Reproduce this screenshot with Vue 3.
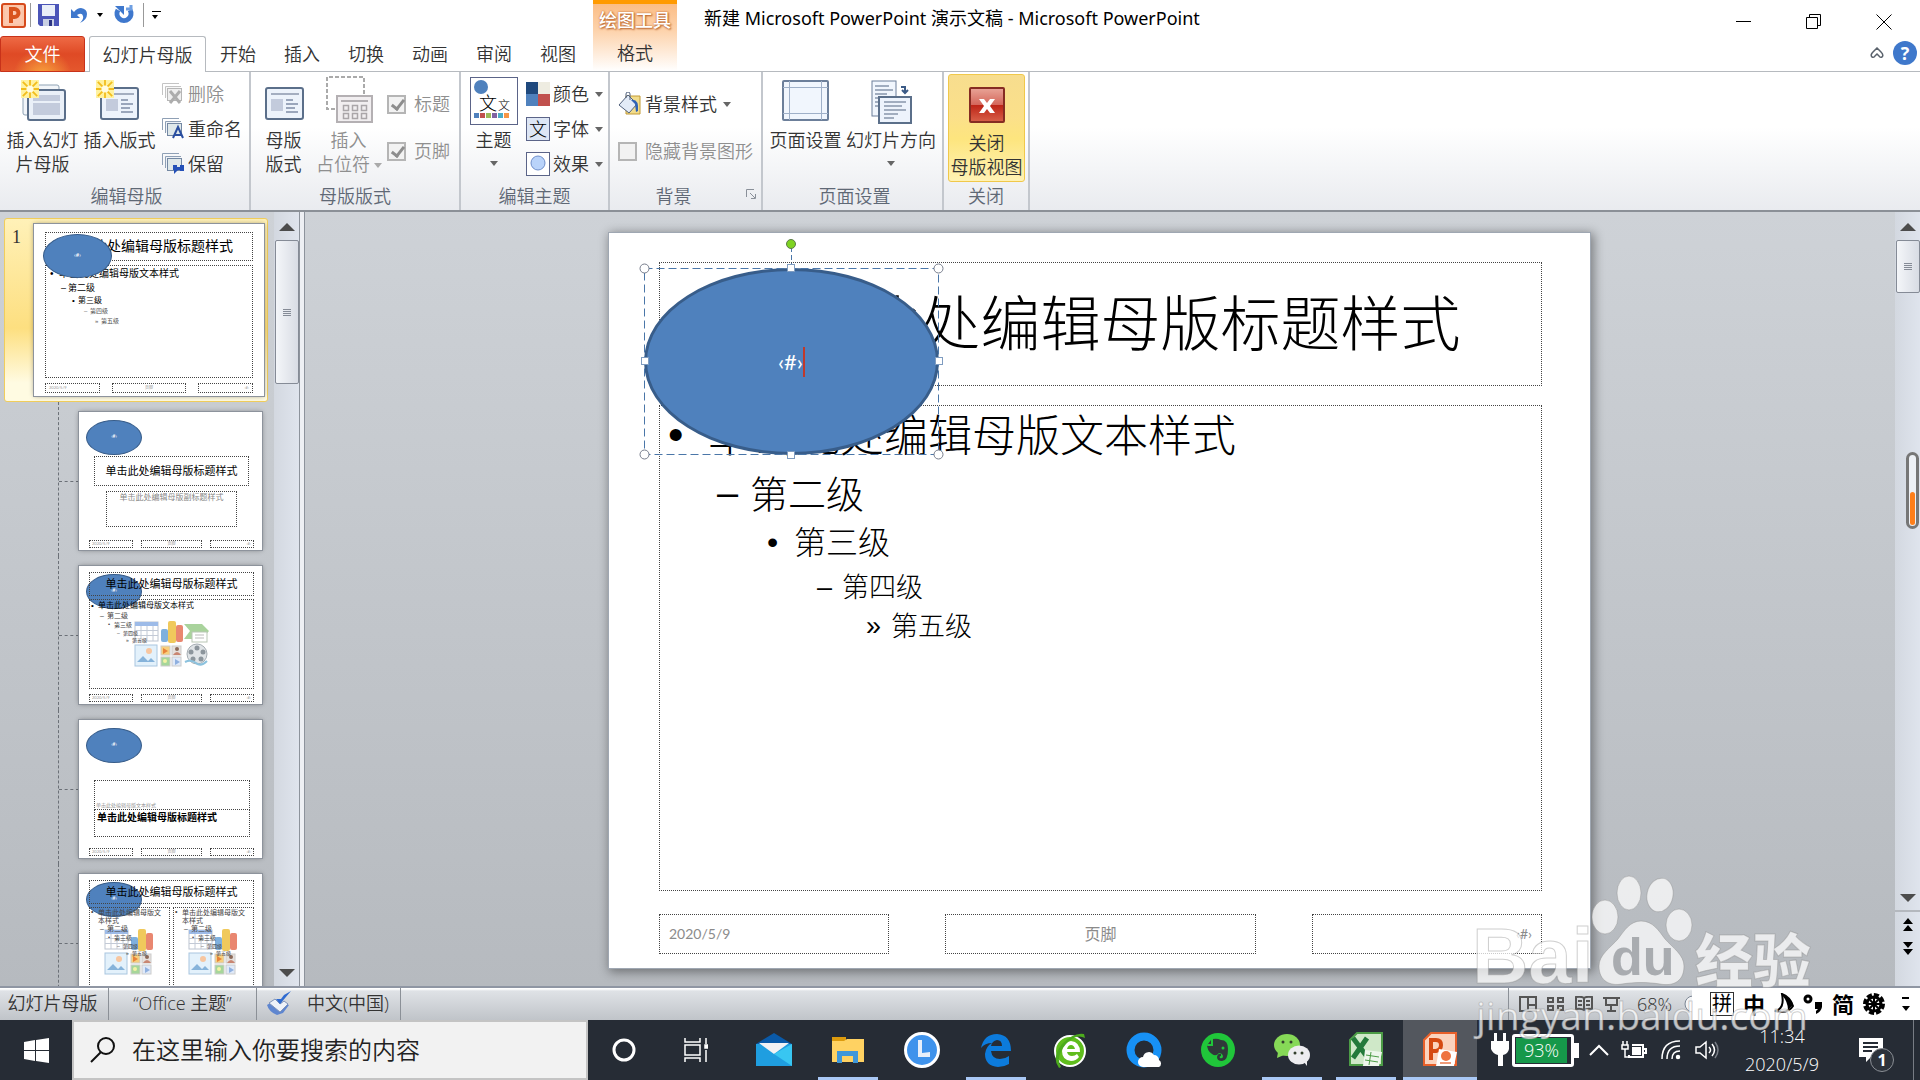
<template>
  <div class="app">
    <svg class="defs" aria-hidden="true">
      <symbol id="content-icons" viewBox="0 0 75 46">
        <rect x="1" y="1" width="23" height="19" fill="#fff" stroke="#bcc4d0" />
        <rect x="1" y="1" width="23" height="4" fill="#9dbbe8" />
        <path d="M1 9.500h23M1 14.500h23M7 5v15M13 5v15M19 5v15" stroke="#c3cad6" />
        <rect x="27" y="8" width="7" height="13" rx="2" fill="#7fb0dd" />
        <rect x="34" y="0" width="8" height="22" rx="2" fill="#f0c95c" />
        <rect x="42" y="4" width="7" height="17" rx="2" fill="#e98770" />
        <path d="M50 3h18l7 7-7 8H50l6-8z" fill="#a9d39c" />
        <rect x="58" y="11" width="15" height="10" fill="#fff" stroke="#b9c6b5" />
        <path d="M61 14h9M61 17h9" stroke="#bbb" />
        <rect x="1" y="24" width="22" height="21" fill="#e3f1fb" stroke="#a9c6df" />
        <circle cx="15" cy="30" r="3" fill="#f7c6a0" />
        <path d="M3 41l6-6 5 5 3-3 4 4z" fill="#86b3da" />
        <rect x="27" y="25" width="9" height="9" fill="#f7cf7d" stroke="#ccc" />
        <path d="M29 27l5 3-5 3z" fill="#e8833a" />
        <rect x="38" y="25" width="9" height="9" fill="#e6e0dc" stroke="#ccc" />
        <circle cx="43" cy="28" r="2" fill="#8d6a5a" />
        <path d="M39 34q4-6 8 0z" fill="#c98672" />
        <rect x="27" y="36" width="9" height="9" fill="#a6d69a" stroke="#ccc" />
        <circle cx="31" cy="40" r="2" fill="#f3f3a4" />
        <rect x="38" y="36" width="9" height="9" fill="#dfe9f8" stroke="#ccc" />
        <path d="M41 38l5 3-5 3z" fill="#8fb0e0" />
        <circle cx="63" cy="33" r="10" fill="#dfe3e6" stroke="#a5adb3" />
        <g fill="#8c959c">
          <circle cx="63" cy="27" r="2.500" /><circle cx="57" cy="31" r="2.500" /><circle cx="69" cy="31" r="2.500" />
          <circle cx="59" cy="38" r="2.500" /><circle cx="67" cy="38" r="2.500" />
        </g>
        <path d="M51 41q6-3 11 1t11-2" fill="none" stroke="#8cc2de" stroke-width="2" />
      </symbol>
      <symbol id="burst" viewBox="0 0 20 20">
        <rect width="20" height="20" fill="#fff2a0" />
        <path d="M10 0v20M0 10h20M2 2l16 16M18 2L2 18" stroke="#f2bd1d" stroke-width="2" />
        <circle cx="10" cy="10" r="4" fill="#fffbe0" />
      </symbol>
      <symbol id="slides-stack" viewBox="0 0 24 24">
        <path d="M1.500 13V1.500H18" fill="none" stroke="#8fa0b5" />
        <path d="M4.500 16V4.500H20" fill="#eef2f7" stroke="#8fa0b5" />
        <rect x="6.500" y="6.500" width="14" height="12" fill="#dfe8ea" stroke="#7488a3" />
      </symbol>
    </svg>

    <header class="titlebar">
      <div class="left">
        <div class="quick">
          <svg class="app-icon" viewBox="0 0 25 25">
            <rect x="1" y="1" width="23" height="23" rx="2" fill="#fbc5a8" stroke="#d64a1c" stroke-width="2" />
            <rect x="4" y="4" width="17" height="17" fill="#fcc9b0" />
            <path d="M10 20V6h3.500a4 4 0 010 8H10" fill="none" stroke="#d9541e" stroke-width="4" />
          </svg>
          <i class="bar"></i>
          <button class="tool" aria-label="保存">
            <svg width="23" height="23" viewBox="0 0 23 23">
              <path d="M1 0h21v22H3l-2-2z" fill="#4b55b8" />
              <rect x="5" y="1" width="13" height="11" fill="#e9eef8" />
              <rect x="6" y="15" width="11" height="7" fill="#c9d0e3" />
              <rect x="12" y="16" width="3" height="6" fill="#2d3583" />
            </svg>
          </button>
          <button class="tool undo" aria-label="撤消">
            <svg width="18" height="20" viewBox="0 0 18 20">
              <path d="M1 4v9h9l-3-3q5-3 6 1 1 3-3 7 7-3 7-9 0-5-6-6-4 0-7 4z" fill="#3f78cd" />
            </svg>
          </button>
          <i class="caret dark"></i>
          <button class="tool redo" aria-label="恢复">
            <svg width="20" height="20" viewBox="0 0 20 20">
              <path d="M4 5a7 7 0 1012 0" fill="none" stroke="#3f78cd" stroke-width="5" />
              <path d="M1 1h9v9z" fill="#3f78cd" />
              <path d="M12 4h5V0" fill="none" stroke="#6f9fe2" stroke-width="3" />
            </svg>
          </button>
          <i class="bar"></i>
          <button class="tool custom" aria-label="自定义快速访问工具栏"><i class="line"></i><i class="caret dark"></i></button>
        </div>
        <nav class="tabs">
          <button class="tab file">文件</button>
          <button class="tab active">幻灯片母版</button>
          <button v-for="t in tabs" :key="t" class="tab">{{ t }}</button>
        </nav>
      </div>
      <div class="context">
        <span class="context-title">绘图工具</span>
        <button class="tab">格式</button>
      </div>
      <h1 class="doc-title">新建 Microsoft PowerPoint 演示文稿 - Microsoft PowerPoint</h1>
      <div class="window">
        <div class="window-buttons">
          <button aria-label="最小化"><svg width="16" height="16"><path d="M0 7.500h15" stroke="#000" /></svg></button>
          <button aria-label="还原">
            <svg width="16" height="16" fill="none" stroke="#000"><path d="M.5 3.500h11v11H.5zM3.500 3V.5h11v11H12" /></svg>
          </button>
          <button aria-label="关闭"><svg width="16" height="16"><path d="M.5.5l15 15M15.500.5l-15 15" stroke="#000" /></svg></button>
        </div>
        <div class="help-row">
          <svg width="14" height="12" fill="none" stroke="#5a626c" stroke-width="1.500"><path d="M2 10q-2-2 1-5l4-4 4 4q3 3 1 5-2 1-3-1l-2-2-2 2q-1 2-3 1z" /></svg>
          <button class="help" aria-label="帮助">?</button>
        </div>
      </div>
    </header>

    <section class="ribbon">
      <div class="group g1">
        <div class="items">
          <button class="big">
            <svg width="48" height="48" viewBox="0 0 48 48">
              <rect x="4" y="5" width="36" height="30" rx="2" fill="#f2f5f9" stroke="#8fa3b5" />
              <rect x="9" y="10" width="37" height="30" rx="2" fill="#eaf0f8" stroke="#5b6f8a" stroke-width="2" />
              <path d="M14 15h27v6H14zM14 23h27v12H14z" fill="#c3cbdc" />
              <use href="#burst" x="1" y="0" width="20" height="18" />
            </svg>
            插入幻灯<br />片母版
          </button>
          <button class="big">
            <svg width="48" height="48" viewBox="0 0 48 48">
              <rect x="5" y="8" width="37" height="31" rx="2" fill="#edf3fb" stroke="#5b6f8a" stroke-width="2" />
              <path d="M18 14h20" stroke="#a4aec0" stroke-width="2" />
              <rect x="10" y="19" width="12" height="12" fill="#c3cbdc" />
              <path d="M25 20h7M25 24h12M25 28h9M25 32h12" stroke="#9aa6bb" stroke-width="2" />
              <use href="#burst" x="-1" y="0" width="20" height="18" />
            </svg>
            插入版式
          </button>
          <div class="rows">
            <button class="row" disabled>
              <svg width="24" height="24" class="faded"><use href="#slides-stack" width="24" height="24" /><path d="M9 9l10 12M19 9L9 21" stroke="#777" stroke-width="3" /></svg>
              删除
            </button>
            <button class="row">
              <svg width="24" height="24"><use href="#slides-stack" width="24" height="24" /><path d="M12 21l5-11 5 11M14 18h6" fill="none" stroke="#2b4fa0" stroke-width="2" /></svg>
              重命名
            </button>
            <button class="row">
              <svg width="24" height="24"><use href="#slides-stack" width="24" height="24" /><path d="M12 13h4v2h3v-2h4v6h-4v-1h-2l-4 4v-4h-1z" fill="#2450b8" /></svg>
              保留
            </button>
          </div>
        </div>
        <div class="group-name">编辑母版</div>
      </div>

      <div class="group g2">
        <div class="items">
          <button class="big narrow">
            <svg width="48" height="48" viewBox="0 0 48 48">
              <rect x="6" y="8" width="37" height="31" rx="2" fill="#edf3fb" stroke="#5b6f8a" stroke-width="2" />
              <path d="M11 14h28" stroke="#a4aec0" stroke-width="2" />
              <rect x="11" y="19" width="12" height="12" fill="#c3cbdc" />
              <path d="M26 20h7M26 24h12M26 28h9M26 32h12" stroke="#9aa6bb" stroke-width="2" />
            </svg>
            母版<br />版式
          </button>
          <button class="big narrow" disabled>
            <svg width="48" height="48" viewBox="0 0 48 48">
              <path d="M10 29H2V-3H39V14" fill="none" stroke="#aaa" stroke-width="2" stroke-dasharray="4 2" />
              <rect x="12" y="16" width="35" height="26" fill="#f1eef0" stroke="#b4b0b3" stroke-width="2" />
              <path d="M16 21h27" stroke="#b4b0b3" stroke-width="2" />
              <path d="M18.500 25.500h5v5h-5zM27.500 25.500h5v5h-5zM36.500 25.500h5v5h-5zM18.500 33.500h5v5h-5zM27.500 33.500h5v5h-5zM36.500 33.500h5v5h-5z" fill="none" stroke="#aaa6a9" stroke-width="1.500" />
            </svg>
            插入<br />占位符<i class="caret inline"></i>
          </button>
          <div class="checks">
            <label><input type="checkbox" checked disabled />标题</label>
            <label><input type="checkbox" checked disabled />页脚</label>
          </div>
        </div>
        <div class="group-name">母版版式</div>
      </div>

      <div class="group g3">
        <div class="items">
          <button class="big theme">
            <svg width="48" height="48" viewBox="0 0 48 48">
              <rect x=".5" y=".5" width="47" height="47" fill="#fff" stroke="#5b6488" />
              <circle cx="11" cy="10" r="7" fill="#4f81bd" />
              <text x="9" y="33" font-size="18">文</text><text x="28" y="33" font-size="12">文</text>
              <path d="M4 36h5v5H4z" fill="#4f81bd" /><path d="M10 36h5v5h-5z" fill="#c0504d" />
              <path d="M16 36h5v5h-5z" fill="#9bbb59" /><path d="M22 36h5v5h-5z" fill="#8064a2" />
              <path d="M28 36h5v5h-5z" fill="#4bacc6" /><path d="M34 36h5v5h-5z" fill="#f79646" />
            </svg>
            主题<i class="caret"></i>
          </button>
          <div class="rows">
            <button class="row">
              <svg width="24" height="24">
                <path d="M0 0h12v12H0z" fill="#1f497d" /><path d="M12 0h12v12H12z" fill="#eeece1" />
                <path d="M0 12h12v12H0z" fill="#4f81bd" /><path d="M12 12h12v12H12z" fill="#c0504d" />
              </svg>
              颜色<i class="caret"></i>
            </button>
            <button class="row">
              <svg width="24" height="24"><rect x=".5" y=".5" width="23" height="23" fill="#dde6f5" stroke="#5b6488" /><text x="3" y="19" font-size="18">文</text></svg>
              字体<i class="caret"></i>
            </button>
            <button class="row">
              <svg width="24" height="24"><rect x=".5" y=".5" width="23" height="23" fill="#fff" stroke="#5b6488" /><circle cx="12" cy="11" r="7" fill="#b9d3fa" stroke="#6f8fcb" /></svg>
              效果<i class="caret"></i>
            </button>
          </div>
        </div>
        <div class="group-name">编辑主题</div>
      </div>

      <div class="group g4">
        <div class="items stacked">
          <button class="row">
            <svg width="24" height="24">
              <path d="M8 4h14v18H8z" fill="#f2dc8b" stroke="#c29a35" />
              <path d="M1 13l9-10 9 9-8 9z" fill="#e3ebf7" stroke="#50607c" />
              <path d="M8 6V2a2 2 0 014 0v6" fill="none" stroke="#50607c" />
              <path d="M13 8q8-2 7 11l-2 1-1-8z" fill="#2f62b5" />
            </svg>
            背景样式<i class="caret"></i>
          </button>
          <label><input type="checkbox" disabled />隐藏背景图形</label>
        </div>
        <div class="group-name">
          背景
          <button class="launcher" aria-label="设置背景格式">
            <svg width="10" height="10" fill="none" stroke="#8a9099"><path d="M.5 8V.5H8M4 4l5 5M9.500 5v4.500H5" /></svg>
          </button>
        </div>
      </div>

      <div class="group g5">
        <div class="items">
          <button class="big">
            <svg width="48" height="48" viewBox="0 0 48 48">
              <rect x="1" y="1" width="45" height="39" rx="1" fill="#f1f6fd" stroke="#6c7f9a" stroke-width="2" />
              <path d="M7.500 1v39M39.500 1v39M1 7.500h45M1 33.500h45" stroke="#9fb0c8" />
            </svg>
            页面设置
          </button>
          <button class="big wide">
            <svg width="48" height="48" viewBox="0 0 48 48">
              <rect x="5" y="1" width="24" height="35" fill="#f1f6fd" stroke="#6c7f9a" />
              <path d="M8 6h14M8 10h18M8 14h12M8 18h3M8 22h3M8 26h3" stroke="#a1adbf" stroke-width="2" />
              <rect x="12" y="17" width="32" height="26" fill="#edf3fc" stroke="#5b6f8a" stroke-width="2" />
              <path d="M17 22h22M17 26h18M17 30h22M17 34h14M17 38h10" stroke="#a1adbf" stroke-width="2" />
              <path d="M34 7h4v6M35 10l3 3 3-3" fill="none" stroke="#3b5a86" stroke-width="2" />
            </svg>
            幻灯片方向<i class="caret"></i>
          </button>
        </div>
        <div class="group-name">页面设置</div>
      </div>

      <div class="group g6">
        <div class="items">
          <button class="big close-master">
            <svg width="48" height="48" viewBox="0 0 48 48">
              <defs>
                <linearGradient id="red" x1="0" y1="0" x2="0" y2="1">
                  <stop offset="0" stop-color="#e9a598" /><stop offset=".5" stop-color="#d4665a" />
                  <stop offset=".5" stop-color="#bd2416" /><stop offset="1" stop-color="#d8614a" />
                </linearGradient>
              </defs>
              <rect x="7" y="5" width="34" height="34" rx="1" fill="url(#red)" stroke="#862c22" stroke-width="2" />
              <path d="M16 16h5l3 4 3-4h5l-5 7 5 7h-5l-3-4-3 4h-5l5-7z" fill="#fff" />
            </svg>
            关闭<br />母版视图
          </button>
        </div>
        <div class="group-name">关闭</div>
      </div>
    </section>

    <main class="workspace">
      <aside class="thumbs">
        <div class="thumb-list">
          <div class="master-item">
            <span class="number">1</span>
            <div class="thumb master">
              <div class="box m-title">单击此处编辑母版标题样式</div>
              <div class="box m-body">
                <p v-for="(l, i) in levels" :key="i" :class="'m' + (i + 1)"><b>{{ l.mark }}</b>{{ l.text }}</p>
              </div>
              <div class="box m-date">2020/5/9</div>
              <div class="box m-foot">页脚</div>
              <div class="box m-num">‹#›</div>
              <div class="oval">‹#›</div>
            </div>
          </div>
          <div v-for="kind in layouts" :key="kind" class="branch">
            <div class="thumb layout">
              <div class="oval">‹#›</div>
              <template v-if="kind === 'cover'">
                <div class="box c-title">单击此处编辑母版标题样式</div>
                <div class="box c-sub">单击此处编辑母版副标题样式</div>
              </template>
              <template v-else-if="kind === 'section'">
                <div class="box s-text">单击此处编辑母版文本样式</div>
                <div class="box s-title">单击此处编辑母版标题样式</div>
              </template>
              <template v-else>
                <div class="box l-title">单击此处编辑母版标题样式</div>
                <div v-for="n in kind === 'two' ? 2 : 1" :key="n" class="box l-body" :class="[kind, 'col' + n]">
                  <svg class="content-icons" :viewBox="kind === 'two' ? '0 0 49 46' : '0 0 75 46'"><use href="#content-icons" width="75" height="46" /></svg>
                  <p v-for="(l, i) in levels" :key="i" :class="'t' + (i + 1)"><b>{{ l.mark }}</b><span>{{ l.text }}</span></p>
                </div>
              </template>
              <div class="box l-date">2020/5/9</div>
              <div class="box l-foot">页脚</div>
              <div class="box l-num">‹#›</div>
            </div>
          </div>
        </div>
        <div class="scroll left-scroll">
          <i class="up"></i>
          <div class="handle"><i class="grip"></i></div>
          <i class="down"></i>
        </div>
      </aside>
      <div class="splitter"></div>

      <section class="stage">
        <article class="slide">
          <div class="box title">单击此处编辑母版标题样式</div>
          <ul class="box body">
            <li v-for="(l, i) in levels" :key="i" :class="'lv' + (i + 1)"><b>{{ l.mark }}</b>{{ l.text }}</li>
          </ul>
          <div class="box date">2020/5/9</div>
          <div class="box foot">页脚</div>
          <div class="box num">‹#›</div>
          <div class="shape">‹#›<i class="cursor"></i></div>
          <svg class="selection" width="306" height="224" viewBox="-6 -32 306 224">
            <g fill="none" stroke="#4a76a8">
              <path d="M.5.5h294v186H.5z" stroke-dasharray="8 4" />
              <path d="M147.500 0v-20" stroke-dasharray="5 3" />
            </g>
            <circle cx="147" cy="-24" r="4.500" fill="#7ed321" stroke="#5c7a4a" />
            <g fill="#fff" stroke="#777d8c">
              <circle cx="0.500" cy="0.500" r="4.500" /><circle cx="294.500" cy="0.500" r="4.500" />
              <circle cx="0.500" cy="186.500" r="4.500" /><circle cx="294.500" cy="186.500" r="4.500" />
            </g>
            <g fill="#fff" stroke="#7f9cc0">
              <rect x="143.500" y="-3.500" width="7" height="7" /><rect x="143.500" y="183.500" width="7" height="7" />
              <rect x="-2.500" y="89.500" width="7" height="7" /><rect x="291.500" y="89.500" width="7" height="7" />
            </g>
          </svg>
        </article>
      </section>

      <div class="scroll right-scroll">
        <i class="up"></i>
        <div class="handle"><i class="grip"></i></div>
        <div class="pill"><i></i></div>
        <i class="down"></i>
        <div class="pager">
          <svg width="12" height="14"><path d="M6 0l5 6H1zM6 7l5 6H1z" /></svg>
          <svg width="12" height="14"><path d="M1 0h10L6 6zM1 7h10l-5 6z" /></svg>
        </div>
      </div>
    </main>

    <footer class="status">
      <span class="cell c1">幻灯片母版</span>
      <span class="cell c2">“Office 主题”</span>
      <span class="cell c3">
        <svg width="26" height="26">
          <path d="M1 15l8-5 14 5-6 8-6 2q-8-3-10-10z" fill="#5e86d0" />
          <path d="M3 13l6-4 5 5 4-3 4 3-8 8z" fill="#eef2f8" stroke="#7f93b8" />
          <path d="M10 9l4 5L25 1l-7 4-3 4z" fill="#2f6bd0" />
        </svg>
        中文(中国)
      </span>
      <div class="views">
        <svg width="18" height="16" fill="none" stroke="#555" stroke-width="2"><path d="M1 1h16v14H1zM9 1v14M10 9h7" /></svg>
        <svg width="18" height="16" fill="none" stroke="#555" stroke-width="2"><path d="M1 2h5v4H1zM11 2h5v4h-5zM1 10h5v4H1zM11 10h5v4h-5z" /></svg>
        <svg width="18" height="16" fill="none" stroke="#555" stroke-width="2"><path d="M1 1q5-1 8 1 3-2 8-1v12q-5-1-8 1-3-2-8-1zM9 2v12M3 5h4M3 9h4M11 5h4M11 9h4" /></svg>
        <svg width="18" height="16" fill="none" stroke="#555" stroke-width="2"><path d="M0 2h17M3 3v6h11V3M8 9v6M4 15h9" /></svg>
        <span class="zoom">68%</span>
        <svg width="8" height="18"><circle cx="9" cy="9" r="8" fill="#f4f5f7" stroke="#7b8593" /></svg>
      </div>
      <div class="ime">
        <span class="boxed">拼</span><span>中</span>
        <svg width="20" height="22"><path d="M8 1q8 3 11 12-5 8-18 5 10-2 7-17z" fill="#fff" stroke="#000" stroke-width="2" /><path d="M8 2q10 3 11 10l-5 5q0-8-6-15z" /></svg>
        <svg width="20" height="20"><circle cx="5" cy="5" r="3" fill="none" stroke="#000" stroke-width="3" /><path d="M12 8h7v5q-1 5-6 7v-3l2-2h-3z" /></svg>
        <span>简</span>
        <svg width="22" height="22" viewBox="-11 -11 22 22">
          <circle r="9" fill="none" stroke="#000" stroke-width="4" stroke-dasharray="5 2" />
          <circle r="7" fill="none" stroke="#000" stroke-width="3" /><path d="M-6 0H6M0-6V6M-4-4l8 8M4-4l-8 8" stroke="#000" stroke-width="2" />
        </svg>
        <svg class="more" width="8" height="18"><path d="M0 2h7v2H0zM0 11h8l-4 5z" /></svg>
      </div>
    </footer>

    <div class="taskbar">
      <button class="start" aria-label="开始">
        <svg width="25" height="25" fill="#fff"><path d="M0 4l11-2v10H0zM12 2l13-2v12H12zM0 13h11v10L0 21zM12 13h13v12l-13-2z" /></svg>
      </button>
      <div class="search">
        <svg width="26" height="26" fill="none" stroke="#111" stroke-width="2"><circle cx="16" cy="9" r="8" /><path d="M11 15L1 25" /></svg>
        <input type="text" aria-label="搜索" placeholder="在这里输入你要搜索的内容" />
      </div>
      <button class="task sys" aria-label="Cortana"><svg width="26" height="26"><circle cx="13" cy="13" r="10" fill="none" stroke="#fff" stroke-width="3" /></svg></button>
      <button class="task sys" aria-label="任务视图">
        <svg width="24" height="26" fill="none" stroke="#fff" stroke-width="1.500"><path d="M1 1v4h15V1M1 8h15v10H1zM1 25v-4h15v4M22 1v6M22 13v12" /><path d="M21 8h3v3h-3z" fill="#fff" /></svg>
      </button>
      <button class="task" aria-label="邮件">
        <svg viewBox="0 0 36 36"><path d="M0 12L18 1l18 11z" fill="#0a5aa8" /><path d="M0 12h36v22H0z" fill="#1f9ee0" /><path d="M3 11h30L18 22z" fill="#f2f2f4" /><path d="M36 12v22L18 22z" fill="#38c6f2" /></svg>
      </button>
      <button class="task open" aria-label="文件资源管理器">
        <svg viewBox="0 0 36 36"><path d="M2 5h14v5H2z" fill="#dd9b0d" /><path d="M2 9h12l3-2h17v23H2z" fill="#ffd262" /><path d="M7 31V19h21v12h-5v-7H12v7z" fill="#3f97d9" /></svg>
      </button>
      <button class="task" aria-label="时钟">
        <svg viewBox="0 0 36 36"><circle cx="18" cy="18" r="16.500" fill="#3f93ec" stroke="#fff" stroke-width="3" /><path d="M14 8h4v13l8-1v5H14z" fill="#e7effa" /></svg>
      </button>
      <button class="task open" aria-label="Edge">
        <svg viewBox="0 0 36 36"><path d="M3 16Q6 2 19 2q14 1 14 17H13q1 8 9 8 5 0 9-3v8q-5 3-11 3Q7 34 7 22q1-8 7-11-7 0-11 5zM13 14h11q0-6-5-6-5 1-6 6z" fill="#0c7bdc" fill-rule="evenodd" /></svg>
      </button>
      <button class="task" aria-label="360安全浏览器">
        <svg viewBox="0 0 36 36"><circle cx="18" cy="19" r="15" fill="#5fbd1d" stroke="#fff" stroke-width="2" /><path d="M19 9q9 1 9 11H15q1 4 5 4 3 0 5-2l2 3q-3 4-8 4-9-1-9-10 1-9 9-10zm-4 8h8q-1-4-4-4-3 0-4 4z" fill="#fff" fill-rule="evenodd" /><path d="M7 36Q-1 26 10 12 22 0 32 2l1 4Q24 1 14 12 3 25 9 35z" fill="#4cab1d" /></svg>
      </button>
      <button class="task" aria-label="QQ浏览器">
        <svg viewBox="0 0 36 36"><circle cx="18" cy="18" r="13.500" fill="none" stroke="#1791f5" stroke-width="8" /><path d="M17 35a5 5 0 010-10 6 6 0 0111-2 5 5 0 015 5 4 4 0 010 7z" fill="#fff" /></svg>
      </button>
      <button class="task" aria-label="印象笔记">
        <svg viewBox="0 0 36 36"><circle cx="18" cy="18" r="17" fill="#20c63a" /><path d="M7 14h6V7q4-1 8 1 7 0 7 9 0 12-6 12-5 0-5-4 1-4 4-3v2q-2 0-1 2 3 1 3-2-1-3-4-3-3 4-7 1-5-3-5-10zM8 12l3-4v4z" fill="#30383a" /><circle cx="23" cy="16" r="1.500" fill="#20c63a" /></svg>
      </button>
      <button class="task open" aria-label="微信">
        <svg viewBox="0 0 36 36"><ellipse cx="13" cy="13" rx="13" ry="11" fill="#86d957" /><path d="M4 20l-1 6 7-3z" fill="#86d957" /><ellipse cx="25" cy="23" rx="11" ry="9.500" fill="#ededf0" /><path d="M30 30l3 4v-6z" fill="#ededf0" /><g fill="#33402d"><circle cx="9" cy="10" r="1.500" /><circle cx="17" cy="10" r="1.500" /><circle cx="21" cy="21" r="1.500" /><circle cx="28" cy="21" r="1.500" /></g></svg>
      </button>
      <button class="task open" aria-label="Excel">
        <svg viewBox="0 0 36 36"><path d="M2 8l7-7h25v32H2z" fill="#cfe8c8" stroke="#4c9c46" stroke-width="2" /><path d="M5 6l15 20M19 6L5 26" stroke="#23793a" stroke-width="5" /><path d="M17 18l17 2-3 14H15z" fill="#eef6ec" /><path d="M18 23l13 2M17 28l13 2M23 20l-2 13" stroke="#4c9c46" /></svg>
      </button>
      <button class="task open current" aria-label="PowerPoint">
        <svg viewBox="0 0 36 36"><path d="M2 8l7-7h25v32H2z" fill="#fbd3bd" stroke="#e8602a" stroke-width="2" /><path d="M9 28V8h5q5 0 5 5t-5 6H9" fill="none" stroke="#d54a12" stroke-width="4" /><path d="M17 17l18 3-3 14H14z" fill="#fff" /><circle cx="24" cy="24" r="5" fill="#ee7340" /><path d="M18 31h11" stroke="#ee9a78" stroke-width="2" /></svg>
      </button>
      <div class="tray">
        <svg width="20" height="34" fill="#fff"><path d="M4 0h3v8h6V0h3v8h3v8q-1 5-6 6v11H8V22q-5-1-7-6V8h3z" /></svg>
        <div class="battery"><span>93%</span></div>
        <svg width="20" height="12" fill="none" stroke="#fff" stroke-width="2"><path d="M1 11l9-9 9 9" /></svg>
        <svg class="power" width="26" height="18" fill="none" stroke="#fff" stroke-width="2"><path d="M8 14v2h14V4H11M22 8h3v4h-3" /><path d="M11 6h9v8h-9z" fill="#fff" stroke="none" /><path d="M2 0v4M6 0v4M1 4h6v4H1zM4 8v8h4" stroke-width="1.500" /></svg>
        <svg class="wifi" width="20" height="20" fill="none" stroke="#fff" stroke-width="1.500"><path d="M1 19Q1 1 19 1M6 19Q6 6 19 6M11 19q0-8 8-8" /><circle cx="17" cy="17" r="1.500" fill="#fff" /></svg>
        <svg width="24" height="20" fill="none" stroke="#fff" stroke-width="1.500"><path d="M1 7h4l6-5v16l-6-5H1zM14 7q3 3 0 6M17 4q5 6 0 12" /><path d="M20 2q6 8 0 16" stroke="#777c84" /></svg>
        <div class="clock"><time>11:34</time><time>2020/5/9</time></div>
        <button class="notice" aria-label="通知">
          <svg width="26" height="24"><path d="M1 0h24v19H13l-5 5v-5H1z" fill="#fff" /><path d="M5 5h15M5 9h15M5 13h9" stroke="#262c35" stroke-width="2" /></svg>
          <b>1</b>
        </button>
      </div>
    </div>

    <svg class="watermark" width="360" height="180" viewBox="0 0 360 180" aria-hidden="true">
      <g class="ink">
        <text x="0" y="114" class="latin">Bai</text>
        <ellipse cx="133" cy="48" rx="13" ry="17" /><ellipse cx="157" cy="24" rx="12" ry="17" />
        <ellipse cx="188" cy="26" rx="13" ry="17" transform="rotate(12 188 26)" /><ellipse cx="207" cy="56" rx="13" ry="16" />
        <path d="M169 52c12 0 18 10 24 18 8 9 19 16 19 27 0 18-14 20-24 18-13-2-25-2-38 0-11 2-23-2-23-18 0-11 11-18 19-27 6-8 12-18 23-18z" />
        <text x="223" y="113" class="cjk">经验</text>
      </g>
      <text x="139" y="106" class="du">du</text>
      <text x="4" y="161" class="ink url">jingyan.baidu.com</text>
    </svg>
  </div>
</template>

<script setup>
const tabs = ['开始', '插入', '切换', '动画', '审阅', '视图']

const levels = [
  { mark: '•', text: '单击此处编辑母版文本样式' },
  { mark: '–', text: '第二级' },
  { mark: '•', text: '第三级' },
  { mark: '–', text: '第四级' },
  { mark: '»', text: '第五级' }
]

const layouts = ['cover', 'content', 'section', 'two']
</script>

<style>
body {
  margin: 0;
  background: #fff;
}
</style>

<style scoped>
.app {
  position: relative;
  display: flex;
  flex-direction: column;
  height: 100vh;
  overflow: hidden;
  font-family: "Open Sans", "Noto Sans CJK SC", sans-serif;
  font-size: 18px;
  font-weight: 350;
  line-height: 24px;
  color: #333;
}

.app * {
  box-sizing: border-box;
}

.defs {
  position: absolute;
  width: 0;
  height: 0;
}

svg {
  display: block;
  flex: none;
}

button {
  padding: 0;
  border: 0;
  background: none;
  font: inherit;
  color: inherit;
  white-space: nowrap;
}

p {
  margin: 0;
}

.caret {
  display: block;
  width: 0;
  height: 0;
  border: 4px solid transparent;
  border-top: 5px solid #666;
  border-bottom: 0;
}

.caret.dark {
  border-width: 4px 3px 0;
  border-top-color: #000;
}

/* title bar */
.titlebar {
  display: flex;
  flex: none;
  height: 72px;
  border-bottom: 1px solid #b6babf;
}

.left {
  display: flex;
  flex-direction: column;
  justify-content: space-between;
  width: 593px;
}

.quick {
  display: flex;
  align-items: center;
  height: 30px;
  padding-left: 1px;
}

.app-icon {
  width: 25px;
  height: 25px;
}

.bar {
  width: 1px;
  height: 24px;
  margin: 0 6px 0 4px;
  background: #999;
}

.undo {
  margin: 0 9px 0 10px;
}

.redo {
  margin: 0 5px 0 11px;
}

.custom {
  padding-left: 2px;
}

.custom .line {
  display: block;
  width: 9px;
  height: 1px;
  margin-bottom: 3px;
  background: #000;
}

.tabs {
  display: flex;
  height: 36px;
  margin-bottom: -1px;
}

.tab {
  width: 64px;
  height: 36px;
  line-height: 36px;
}

.tab.file {
  width: 85px;
  margin-right: 4px;
  border: 1px solid #c8321a;
  border-radius: 3px 3px 0 0;
  background: radial-gradient(ellipse at 50% 115%, #f9a63c, transparent 50%), linear-gradient(#ee6a45, #df4a25 50%, #e4572d);
  line-height: 34px;
  color: #fff;
}

.tab.active {
  width: 117px;
  border: 1px solid #b6babf;
  border-bottom: 0;
  border-radius: 3px 3px 0 0;
  background: #fff;
}

.context {
  display: flex;
  flex-direction: column;
  align-items: center;
  width: 84px;
  padding-top: 4px;
  border-top: 4px solid #ff9a00;
  background: linear-gradient(#fbbd85, #fdd3ac 40%, #fff);
}

.context-title {
  height: 27px;
  font-weight: 500;
  line-height: 24px;
  color: #fff;
  text-shadow: 0 0 2px #b9622a, 1px 1px 2px #b9622a;
}

.doc-title {
  flex: 1;
  margin: 0 0 0 27px;
  font-family: "Noto Sans", "Noto Sans CJK SC", sans-serif;
  font-size: 18px;
  font-weight: 400;
  line-height: 36px;
  color: #000;
  white-space: nowrap;
}

.window {
  width: 190px;
}

.window-buttons {
  display: flex;
  justify-content: space-between;
  height: 41px;
  padding: 14px 28px 0 6px;
}

.window-buttons button {
  height: 16px;
}

.help-row {
  display: flex;
  align-items: center;
  justify-content: flex-end;
  gap: 9px;
  padding-right: 3px;
}

.help {
  width: 24px;
  height: 24px;
  border-radius: 50%;
  background: #3f78cb;
  font-weight: 700;
  color: #fff;
}

/* ribbon */
.ribbon {
  display: flex;
  flex: none;
  height: 140px;
  border-bottom: 2px solid #8b9097;
  background: linear-gradient(#fff 40%, #e9ebef);
}

.group {
  display: flex;
  flex-direction: column;
  border-right: 2px solid #c3c7cd;
}

.items {
  display: flex;
  align-items: flex-start;
  height: 110px;
}

.group-name {
  position: relative;
  line-height: 28px;
  text-align: center;
  color: #5f6875;
}

.g1 {
  width: 251px;
  padding-left: 4px;
}

.g2 {
  width: 210px;
}

.g3 {
  width: 149px;
}

.g4 {
  width: 153px;
}

.g5 {
  width: 181px;
  padding-left: 4px;
}

.g6 {
  width: 86px;
}

.big {
  width: 77px;
  padding-top: 8px;
  text-align: center;
}

.big svg {
  margin: 0 auto;
  overflow: visible;
}

.big > .caret {
  margin: 9px auto 0;
}

.big > .caret.inline {
  display: inline-block;
  margin: 0 0 3px 4px;
}

.big.narrow {
  width: 65px;
}

.big.wide {
  width: 94px;
}

.big:disabled,
.row:disabled {
  color: #8f8f8f;
}

.big:disabled .caret {
  border-top-color: #aaa;
}

.faded {
  filter: grayscale(1);
  opacity: 0.6;
}

.rows {
  display: flex;
  flex-direction: column;
  gap: 11px;
  padding: 10px 0 0 3px;
}

.g3 .rows {
  padding-left: 0;
}

.row {
  display: flex;
  align-items: center;
  gap: 3px;
  height: 24px;
}

.row .caret {
  margin-left: 3px;
}

.checks {
  display: flex;
  flex-direction: column;
  gap: 23px;
  padding: 20px 0 0 6px;
}

label {
  display: flex;
  align-items: center;
  gap: 8px;
  color: #8f8f8f;
  white-space: nowrap;
}

input[type="checkbox"] {
  appearance: none;
  width: 19px;
  height: 19px;
  margin: 0;
  border: 2px solid #b5b5b5;
  background: #f2f2f2;
}

input[type="checkbox"]:checked::after {
  content: "";
  display: block;
  width: 5px;
  height: 10px;
  margin: 0 0 0 5px;
  border: solid #8d8d8d;
  border-width: 0 3px 3px 0;
  transform: rotate(38deg);
}

.theme {
  width: 65px;
  padding-top: 5px;
}

.theme svg {
  margin-bottom: 3px;
}

.theme text,
.row text {
  font-family: "Noto Sans CJK SC", sans-serif;
  font-weight: 300;
  fill: #000;
}

.items.stacked {
  flex-direction: column;
  gap: 23px;
  padding: 20px 0 0 8px;
}

.g4 .group-name {
  padding-right: 24px;
}

.launcher {
  position: absolute;
  right: 5px;
  top: 7px;
}

.close-master {
  width: 77px;
  height: 108px;
  margin: 2px 0 0 4px;
  padding-top: 5px;
  border: 1px solid #f0c84a;
  border-radius: 3px;
  background: linear-gradient(#f7dd8e, #fbe08a 40%, #fde57e 60%, #fff2b4);
}

/* workspace */
.workspace {
  display: flex;
  flex: 1;
  min-height: 0;
  background: linear-gradient(#ced2d7, #b6babf);
}

.thumbs {
  display: flex;
  width: 299px;
}

.thumb-list {
  flex: 1;
  padding: 6px 6px 0 4px;
  overflow: hidden;
}

.master-item {
  display: flex;
  height: 184px;
  padding: 5px 3px 0 7px;
  border: 1px solid #f0cd5c;
  border-radius: 3px;
  background: linear-gradient(#fff1b8, #fddf80 60%, #fffbe2 90%);
}

.number {
  width: 22px;
  font-family: "Liberation Serif", serif;
  line-height: 26px;
}

.thumb,
.slide {
  position: relative;
  background: #fff;
  font-family: Lato, "Noto Sans CJK SC", sans-serif;
  color: #000;
}

.thumb {
  flex: none;
  outline: 1px solid #8d939c;
  box-shadow: 0 0 5px rgba(0, 0, 0, 0.4);
  overflow: hidden;
  font-weight: 400;
  white-space: nowrap;
}

.master {
  width: 230px;
  height: 172px;
}

.layout {
  width: 183px;
  height: 138px;
}

.branch {
  position: relative;
  height: 154px;
  margin-left: 54px;
  padding: 10px 0 0 20px;
  border-left: 1px dashed #6b7077;
}

.branch::before {
  content: "";
  position: absolute;
  left: 0;
  top: 79px;
  width: 20px;
  border-top: 1px dashed #6b7077;
}

.box {
  position: absolute;
  margin: 0;
  padding: 0;
  border: 1px dotted #444;
}

.box b {
  flex: none;
  display: inline-block;
  font-family: "Liberation Sans", sans-serif;
  font-weight: 400;
}

.oval {
  position: absolute;
  left: 7px;
  top: 8px;
  width: 56px;
  height: 35px;
  border: 1px solid #385d8a;
  border-radius: 50%;
  background: #4f81bd;
  font-size: 5px;
  line-height: 31px;
  text-align: center;
  color: #fff;
}

.master .oval {
  left: 9px;
  top: 10px;
  width: 69px;
  height: 44px;
  font-size: 6px;
  line-height: 40px;
}

.m-title {
  left: 11px;
  top: 8px;
  width: 208px;
  height: 29px;
  font-size: 14px;
  line-height: 26px;
  text-align: center;
}

.m-body {
  left: 11px;
  top: 41px;
  width: 208px;
  height: 113px;
}

.m1 {
  padding-left: 4px;
  font-size: 10px;
  line-height: 14px;
}

.m2 {
  padding-left: 15px;
  font-size: 9px;
  line-height: 13px;
}

.m3 {
  padding-left: 26px;
  font-size: 8px;
  line-height: 11px;
}

.m4,
.m5 {
  padding-left: 38px;
  font-size: 6px;
  line-height: 9px;
  color: #555;
}

.m5 {
  padding-left: 49px;
}

.m1 b {
  width: 9px;
}

.m2 b {
  width: 7px;
}

.m3 b,
.m4 b,
.m5 b {
  width: 6px;
}

.m-date,
.m-foot,
.m-num {
  top: 159px;
  width: 55px;
  height: 10px;
  padding: 0 3px;
  font-size: 4px;
  line-height: 8px;
  color: #999;
}

.m-date {
  left: 11px;
}

.m-foot {
  left: 78px;
  width: 74px;
  text-align: center;
}

.m-num {
  left: 164px;
  text-align: right;
}

.c-title,
.l-title {
  left: 15px;
  top: 44px;
  width: 155px;
  height: 30px;
  font-size: 11px;
  line-height: 28px;
  text-align: center;
}

.l-title {
  left: 10px;
  top: 6px;
  width: 165px;
  height: 24px;
  line-height: 22px;
}

.c-sub {
  left: 27px;
  top: 79px;
  width: 131px;
  height: 36px;
  font-size: 8px;
  line-height: 10px;
  text-align: center;
  color: #888;
}

.s-text {
  left: 15px;
  top: 60px;
  width: 156px;
  height: 30px;
  padding: 20px 0 0 1px;
  font-size: 5px;
  line-height: 8px;
  color: #999;
}

.s-title {
  left: 15px;
  top: 89px;
  width: 156px;
  height: 28px;
  padding-left: 2px;
  font-size: 10px;
  font-weight: 700;
  line-height: 14px;
}

.l-body {
  left: 10px;
  top: 33px;
  width: 165px;
  height: 90px;
}

.l-body p {
  position: relative;
  display: flex;
}

.l-body.two {
  width: 81px;
}

.l-body.col2 {
  left: 94px;
}

.content-icons {
  position: absolute;
  left: 44px;
  top: 21px;
  width: 75px;
  height: 46px;
}

.two .content-icons {
  left: 14px;
  width: 49px;
}

.t1 {
  padding-left: 1px;
  font-size: 8px;
  line-height: 11px;
}

.two .t1 {
  padding-right: 8px;
  font-size: 7px;
  line-height: 8px;
  color: #444;
  white-space: normal;
}

.t2,
.t3,
.t4,
.t5 {
  padding-left: 10px;
  font-size: 7px;
  line-height: 9px;
  color: #444;
}

.t3 {
  padding-left: 18px;
  font-size: 6px;
}

.t4 {
  padding-left: 27px;
  font-size: 5px;
  line-height: 8px;
}

.t5 {
  padding-left: 36px;
  font-size: 5px;
  line-height: 7px;
}

.t1 b,
.t2 b {
  width: 7px;
}

.t3 b,
.t4 b,
.t5 b {
  width: 6px;
}

.l-date,
.l-foot,
.l-num {
  top: 128px;
  width: 44px;
  height: 8px;
  padding: 0 2px;
  font-size: 4px;
  line-height: 6px;
  color: #999;
}

.l-date {
  left: 10px;
}

.l-foot {
  left: 62px;
  width: 61px;
  text-align: center;
}

.l-num {
  left: 131px;
  text-align: right;
}

/* scroll bars */
.scroll {
  display: flex;
  flex-direction: column;
  align-items: center;
  width: 25px;
  padding: 11px 0 9px;
  background: linear-gradient(90deg, #d3d8e0, #dfe4ed);
}

.up,
.down {
  border: 8px solid transparent;
}

.up {
  border-top: 0;
  border-bottom-color: #4c4c4c;
}

.down {
  margin-top: auto;
  border-bottom: 0;
  border-top-color: #4c4c4c;
}

.handle {
  display: flex;
  align-items: center;
  justify-content: center;
  width: 24px;
  height: 144px;
  margin-top: 9px;
  border: 1px solid #858b96;
  border-radius: 2px;
  background: linear-gradient(90deg, #f4f6f9, #d8dce4);
}

.grip {
  width: 8px;
  height: 7px;
  background: repeating-linear-gradient(#858b96 0 1px, transparent 1px 2px);
}

.splitter {
  width: 6px;
  border: solid #8d939c;
  border-width: 0 1px;
  background: #eef0f4;
}

.right-scroll {
  position: relative;
  padding-bottom: 30px;
}

.right-scroll .handle {
  height: 53px;
}

.pill {
  position: absolute;
  right: 1px;
  top: 240px;
  display: flex;
  align-items: flex-end;
  width: 13px;
  height: 77px;
  padding: 1px;
  border: 3px solid #777;
  border-radius: 7px;
  background: #eef1f6;
}

.pill i {
  width: 5px;
  height: 33px;
  border-radius: 3px;
  background: #ff7f1a;
}

.pager {
  display: flex;
  flex-direction: column;
  gap: 10px;
  margin-top: 8px;
  padding: 6px 7px 0;
  border-top: 2px solid #b4b8be;
}

/* slide */
.stage {
  display: flex;
  flex: 1;
  align-items: flex-start;
  justify-content: center;
  min-width: 0;
  padding: 21px 1px 0 0;
  overflow: hidden;
}

.slide {
  flex: none;
  width: 981px;
  height: 735px;
  box-shadow: 0 0 0 1px #9fa7b2, 2px 2px 10px 2px rgba(0, 0, 0, 0.4);
  font-weight: 300;
}

.title {
  left: 50px;
  top: 29px;
  width: 883px;
  height: 124px;
  font-size: 60px;
  line-height: 120px;
  text-align: center;
}

.body {
  left: 50px;
  top: 172px;
  width: 883px;
  height: 486px;
  padding-top: 3px;
  list-style: none;
}

.body li {
  display: flex;
}

.lv1 {
  padding-left: 8px;
  font-size: 44px;
  line-height: 52px;
}

.lv2 {
  margin-top: 7px;
  padding-left: 57px;
  font-size: 38px;
  line-height: 50px;
}

.lv3 {
  margin-top: 4px;
  padding-left: 107px;
  font-size: 32px;
  line-height: 40px;
}

.lv4 {
  margin-top: 7px;
  padding-left: 157px;
  font-size: 27px;
  line-height: 36px;
}

.lv5 {
  margin-top: 3px;
  padding-left: 206px;
  font-size: 27px;
  line-height: 36px;
}

.lv1 b {
  width: 40px;
}

.lv2 b {
  width: 33px;
}

.lv3 b {
  width: 27px;
}

.lv4 b,
.lv5 b {
  width: 25px;
}

.date,
.foot,
.num {
  top: 681px;
  width: 230px;
  height: 40px;
  padding: 0 9px;
  font-size: 14px;
  font-weight: 400;
  line-height: 38px;
  color: #8b8b8b;
}

.date {
  left: 50px;
}

.foot {
  left: 336px;
  width: 311px;
  font-size: 16px;
  text-align: center;
}

.num {
  left: 703px;
  text-align: right;
}

.shape {
  position: absolute;
  left: 35px;
  top: 35px;
  display: flex;
  align-items: center;
  justify-content: center;
  width: 295px;
  height: 187px;
  border: 3px solid #385d8a;
  border-radius: 50%;
  background: #4f81bd;
  font-size: 22px;
  font-weight: 400;
  color: #fff;
}

.cursor {
  width: 2px;
  height: 30px;
  background: #c0392b;
}

.selection {
  position: absolute;
  left: 29px;
  top: 3px;
}

/* status bar */
.status {
  display: flex;
  flex: none;
  height: 34px;
  border-top: 2px solid #8f96a3;
  background: linear-gradient(#fff 1px, #dfe2e6 3px, #c0c4c9);
  line-height: 30px;
  color: #333;
}

.cell {
  display: flex;
  align-items: center;
  justify-content: center;
  padding-bottom: 2px;
  border-right: 1px solid #8b9097;
  white-space: nowrap;
}

.c1 {
  width: 109px;
  padding-right: 3px;
}

.c2 {
  width: 148px;
}

.c3 {
  gap: 15px;
  width: 144px;
  padding-right: 2px;
}

.views {
  display: flex;
  align-items: center;
  gap: 10px;
  margin-left: auto;
  padding-left: 10px;
  border-left: 1px solid #8b9097;
}

.zoom {
  width: 37px;
  margin-left: 6px;
}

.ime {
  display: flex;
  align-items: center;
  gap: 9px;
  width: 228px;
  padding-left: 18px;
  background: #fff;
  font-size: 22px;
  font-weight: 700;
  color: #000;
}

.boxed {
  width: 24px;
  height: 24px;
  border: 1px solid #333;
  font-size: 20px;
  font-weight: 400;
  line-height: 21px;
  text-align: center;
}

.more {
  margin-left: 8px;
}

/* taskbar */
.taskbar {
  display: flex;
  flex: none;
  height: 60px;
  background: #262c35;
  color: #fff;
}

.start {
  display: flex;
  align-items: center;
  justify-content: center;
  width: 72px;
}

.search {
  display: flex;
  align-items: center;
  gap: 16px;
  width: 516px;
  padding-left: 16px;
  border: 2px solid #c4c4c4;
  background: #f2f2f2;
}

.search input {
  flex: 1;
  padding: 0;
  border: 0;
  outline: 0;
  background: none;
  font: inherit;
  font-size: 24px;
  line-height: 36px;
}

.search input::placeholder {
  color: #222;
  opacity: 1;
}

.task {
  position: relative;
  display: flex;
  align-items: center;
  justify-content: center;
  width: 74px;
}

.task.sys {
  width: 72px;
}

.task.sys + .task:not(.sys) {
  margin-left: 5px;
}

.task:not(.sys) svg {
  width: 36px;
  height: 36px;
}

.task.open::after {
  content: "";
  position: absolute;
  left: 7px;
  right: 7px;
  bottom: 0;
  height: 3px;
  background: #a9c8f5;
}

.task.current {
  background: #53575e;
}

.task.current::after {
  left: 0;
  right: 0;
}

.tray {
  display: flex;
  align-items: center;
  margin: 0 6px 0 auto;
  border-right: 1px solid #777c84;
}

.battery {
  position: relative;
  width: 62px;
  height: 33px;
  margin: 0 15px 0 2px;
  padding: 1px;
  border: 3px solid #fff;
  border-radius: 3px;
  text-align: center;
}

.battery span {
  display: block;
  width: 51px;
  height: 25px;
  background: #16984a;
  line-height: 24px;
}

.battery::after {
  content: "";
  position: absolute;
  right: -8px;
  top: 6px;
  width: 5px;
  height: 15px;
  background: #fff;
}

.power {
  margin-left: 12px;
}

.wifi {
  margin: 0 14px;
}

.clock {
  display: flex;
  flex-direction: column;
  align-items: center;
  width: 126px;
  line-height: 28px;
}

.notice {
  position: relative;
  width: 26px;
  margin: 0 29px 0 13px;
}

.notice b {
  position: absolute;
  left: 12px;
  top: 10px;
  width: 24px;
  height: 24px;
  border: 1px solid #8b8f95;
  border-radius: 50%;
  background: #2d333b;
  font-size: 16px;
  line-height: 22px;
}

.watermark {
  position: absolute;
  right: 88px;
  bottom: 31px;
  pointer-events: none;
}

.ink {
  fill: #fff;
  fill-opacity: 0.72;
  stroke: #888;
  stroke-opacity: 0.4;
}

.latin {
  font: 700 78px "Liberation Sans", sans-serif;
}

.cjk {
  font: 900 58px "Noto Sans CJK SC", sans-serif;
}

.du {
  font: 700 52px "Liberation Sans", sans-serif;
  fill: #a9acb0;
}

.url {
  font: 500 39px "Open Sans", sans-serif;
}
</style>
